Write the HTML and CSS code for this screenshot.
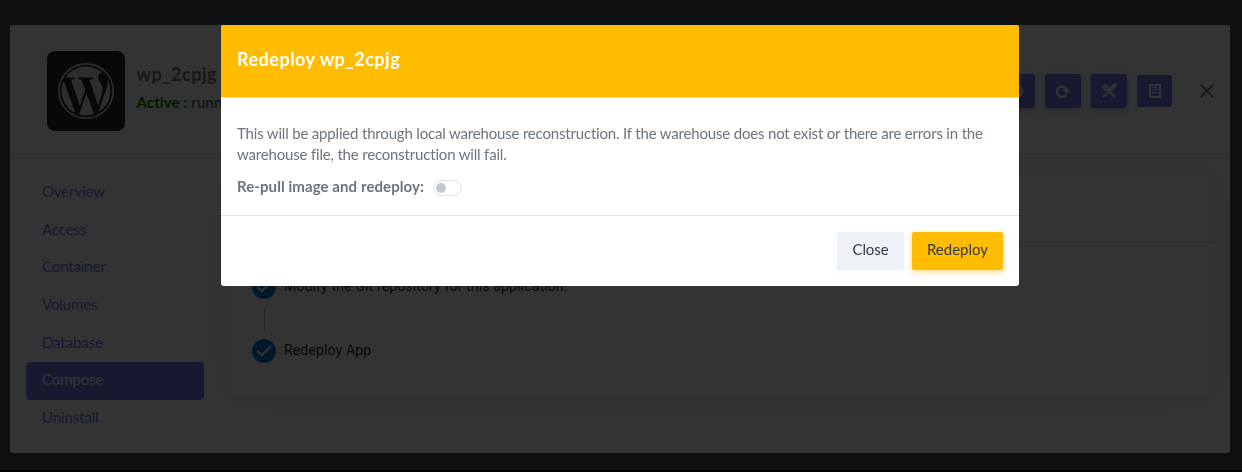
FILE: index.html
```html
<!DOCTYPE html>
<html lang="en">
<head>
<meta charset="utf-8">
<title>Redeploy wp_2cpjg</title>
<link rel="stylesheet" href="styles.css">
</head>
<body>
<div class="page">
  <main class="panel">
    <header class="app-header">
      <div class="app-logo">
        <svg width="56" height="56" viewBox="0 0 24 24"><circle cx="12" cy="12" r="11.65" fill="none" stroke="currentColor" stroke-width=".7"/><path fill="currentColor" transform="translate(12 12) scale(.97) translate(-12 -12)" d="M21.469 6.825c.84 1.537 1.318 3.3 1.318 5.175 0 3.979-2.156 7.456-5.363 9.325l3.295-9.527c.615-1.54.82-2.771.82-3.864 0-.405-.026-.78-.07-1.11m-7.981.105c.647-.03 1.232-.105 1.232-.105.582-.075.514-.93-.067-.899 0 0-1.755.135-2.88.135-1.064 0-2.85-.15-2.85-.15-.585-.03-.661.855-.075.885 0 0 .54.061 1.125.09l1.68 4.605-2.37 7.08L5.354 6.9c.649-.03 1.234-.1 1.234-.1.585-.075.516-.93-.065-.896 0 0-1.746.138-2.874.138-.2 0-.438-.008-.69-.015C4.911 3.15 8.235 1.215 12 1.215c2.809 0 5.365 1.072 7.286 2.833-.046-.003-.091-.009-.141-.009-1.06 0-1.812.923-1.812 1.914 0 .89.513 1.643 1.06 2.531.411.72.89 1.643.89 2.977 0 .915-.354 1.994-.821 3.479l-1.075 3.585-3.9-11.61.001.014zM12 22.784c-1.059 0-2.081-.153-3.048-.437l3.237-9.406 3.315 9.087c.024.053.05.101.078.149-1.12.393-2.325.609-3.582.609M1.211 12c0-1.564.336-3.05.935-4.39L7.29 21.709C3.694 19.96 1.212 16.271 1.211 12"/></svg>
      </div>
      <div class="app-title">
        <h4 class="app-name">wp_2cpjg</h4>
        <div class="app-status"><span class="status-active">Active :</span> running</div>
      </div>
      <div class="app-actions">
        <button class="action"><svg width="16" height="16" viewBox="0 0 16 16" fill="none" stroke="currentColor" stroke-width="2"><circle cx="8" cy="8" r="5"/></svg></button>
        <button class="action"><svg width="16" height="16" viewBox="0 0 16 16"><path d="M11 12.1A5.2 5.2 0 1 1 12.2 7.5" fill="none" stroke="currentColor" stroke-width="2.2"/><path d="M8 7h7.6l-3.6 4.2z" fill="currentColor"/></svg></button>
        <button class="action"><svg width="18" height="18" viewBox="0 0 18 18" fill="none" stroke="currentColor"><path d="M7 7.2l7.8 7.8M3 15.2L11 7.4" stroke-width="2.4"/><path d="M11 7.3l3.6-4.2" stroke-width="4" stroke-linecap="round"/><path d="M1.6 4.2l3.8 3.7 2.5-.1.2-2.5L4.6 1.7M3 2.8l3.7 3.7" stroke-width="1.5"/></svg></button>
        <button class="action action-flat"><svg width="12" height="14" viewBox="0 0 12 14"><path fill="currentColor" fill-rule="evenodd" d="M0 0h12v14H0zM2 2v10h8V2z"/><path d="M3 3.5h5M3 5.5h6M3 8.5h6" stroke="currentColor" stroke-width="1"/></svg></button>
        <svg class="dismiss" width="14" height="14" viewBox="0 0 14 14"><path d="M.7.7l12.6 12.6M13.3.7L.7 13.3" stroke="currentColor" stroke-width="1.7"/></svg>
      </div>
    </header>
    <div class="app-body">
      <nav class="side-nav">
        <a class="nav-item">Overview</a>
        <a class="nav-item">Access</a>
        <a class="nav-item">Container</a>
        <a class="nav-item">Volumes</a>
        <a class="nav-item">Database</a>
        <a class="nav-item active">Compose</a>
        <a class="nav-item">Uninstall</a>
      </nav>
      <section class="card">
        <div class="card-head"></div>
        <div class="steps">
          <div class="step"><svg class="check" width="24" height="24" viewBox="0 0 24 24"><circle cx="12" cy="12" r="12" fill="currentColor"/><path d="M5.5 12l4.3 4.3L18.6 7.4" fill="none" stroke="#fff" stroke-width="2"/></svg><span class="step-label">Modify the Git repository for this application.</span></div>
          <div class="connector"></div>
          <div class="step"><svg class="check" width="24" height="24" viewBox="0 0 24 24"><circle cx="12" cy="12" r="12" fill="currentColor"/><path d="M5.5 12l4.3 4.3L18.6 7.4" fill="none" stroke="#fff" stroke-width="2"/></svg><span class="step-label">Redeploy App</span></div>
        </div>
      </section>
    </div>
  </main>
</div>
<div class="backdrop">
  <div class="modal" role="dialog">
    <div class="modal-header"><h4 class="modal-title">Redeploy wp_2cpjg</h4></div>
    <div class="modal-body">
      <p class="message">This will be applied through local warehouse reconstruction. If the warehouse does not exist or there are errors in the<br>warehouse file, the reconstruction will fail.</p>
      <div class="option"><label class="option-label">Re-pull image and redeploy:</label><span class="switch"></span></div>
    </div>
    <div class="modal-footer"><button class="btn btn-light">Close</button><button class="btn btn-warning">Redeploy</button></div>
  </div>
</div>
</body>
</html>
```
FILE: styles.css
```css
* { box-sizing: border-box; }
body { margin: 0; background: #464b55; font: 15px/21px Lato, "Open Sans", sans-serif; color: #6c757d; overflow: hidden; }
h4, p { margin: 0; }
button { border: 0; font: inherit; }
.page { height: 472px; padding: 25px 12px 0 10px; border-bottom: 2px solid #140014; }
.panel { height: 428px; background: #fff; border-radius: 3px; display: flex; flex-direction: column; }
.app-header { height: 133px; flex: none; padding: 0 16px 0 36.5px; border-bottom: 1px solid #dee2e6; display: flex; align-items: center; }
.app-logo { width: 78.5px; height: 80px; border-radius: 8px; background: #23282d; color: #e0e0e0; display: flex; align-items: center; justify-content: center; }
.app-title { margin: -8px 0 0 11.5px; }
.app-name { font-size: 18px; line-height: 24px; font-weight: 700; letter-spacing: .5px; }
.app-status { margin-top: 6px; font-weight: 700; letter-spacing: .1px; }
.status-active { color: #008000; }
.app-actions { margin-left: auto; display: flex; align-items: center; gap: 10px; }
.action { width: 36px; height: 34px; padding: 0; border-radius: 3px; background: #727cf5; color: #fff; display: flex; align-items: center; justify-content: center; box-shadow: 0 2px 6px rgba(114, 124, 245, .5); }
.action-flat { width: 35px; height: 32px; box-shadow: none; }
.dismiss { margin-left: 18px; color: #6c757d; }
.app-body { flex: 1; display: flex; gap: 24px; padding: 16px; }
.side-nav { width: 178px; flex: none; }
.nav-item { display: flex; align-items: center; height: 37.6px; padding: 0 16px 2px; color: #727cf5; border-radius: 4px; letter-spacing: -.12px; }
.nav-item.active { background: #727cf5; color: #fff; }
.card { flex: 1; height: 222px; border-radius: 4px; box-shadow: 0 0 35px rgba(154, 161, 171, .15); }
.card-head { height: 69px; border-bottom: 1px solid #dee2e6; }
.steps { padding: 32px 24px; font: 14px/22px Roboto, sans-serif; letter-spacing: .15px; color: rgba(0, 0, 0, .87); }
.step { display: flex; gap: 8px; height: 24px; }
.check { color: #1976d2; }
.connector { height: 24px; margin: 8px 0 8px 12px; border-left: 1px solid #bdbdbd; }
.backdrop { position: fixed; inset: 0; background: rgba(0, 0, 0, .8); padding: 25px 0 0 221px; }
.modal { width: 798px; height: 261px; background: #fff; border-radius: 3px; overflow: hidden; }
.modal-header { height: 73px; padding: 22px 16px; background: #ffbc00; border-bottom: 1px solid #dee2e6; }
.modal-title { color: #fff; font-size: 18px; line-height: 25px; font-weight: 700; letter-spacing: .5px; }
.modal-body { height: 117px; padding: 25px 16px 0; }
.message { white-space: nowrap; letter-spacing: -.18px; }
.option { display: flex; align-items: center; margin-top: 11px; }
.option-label { font-weight: 700; letter-spacing: .08px; }
.switch { width: 29px; height: 16px; margin: 3px 0 0 9px; border: 1px solid #dee2e6; border-radius: 8px; padding: 2px; }
.switch::before { content: ""; display: block; width: 10px; height: 10px; border-radius: 50%; background: #c4c9ce; }
.modal-footer { height: 71px; padding: 16px; border-top: 1px solid #dee2e6; display: flex; justify-content: flex-end; gap: 8px; }
.btn { height: 38px; padding: 0 0 3px; border-radius: 2px; color: #313a46; }
.btn-light { width: 67px; background: #eef2f7; box-shadow: 0 2px 6px rgba(238, 242, 247, .5); letter-spacing: -.1px; }
.btn-warning { width: 91px; background: #ffbc00; box-shadow: 0 2px 6px rgba(255, 188, 0, .5); }
```
